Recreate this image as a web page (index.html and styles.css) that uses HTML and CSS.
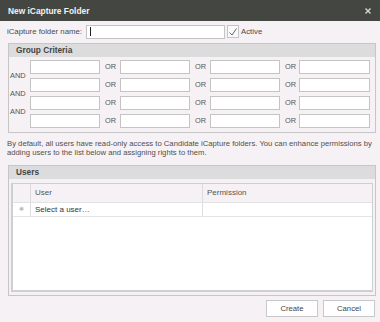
FILE: index.html
```html
<!DOCTYPE html>
<html lang="en">
<head>
    <meta charset="UTF-8">
    <title>New iCapture Folder</title>
    <link rel="stylesheet" href="styles.css">
</head>
<body>

    <div class="dialog">
        <div class="titlebar">
            <span class="title">New iCapture Folder</span>
            <svg class="close" width="8" height="8" viewBox="0 0 8 8">
                <path d="M1.5 1.5 L6.5 6.5 M6.5 1.5 L1.5 6.5" stroke="#d6d6d6" stroke-width="1.4"/>
            </svg>
        </div>

        <div class="content">
            <div class="nameRow">
                <span class="label">iCapture folder name:</span>
                <div class="textBox nameBox"><span class="caret"></span></div>
                <span class="checkBox">
                    <svg width="10" height="10" viewBox="0 0 10 10">
                        <path d="M1.5 5.5 L4 8 L8.5 1.5" fill="none" stroke="#666" stroke-width="1"/>
                    </svg>
                </span>
                <span class="label">Active</span>
            </div>

            <!-- Group Criteria -->
            <div class="panel criteriaPanel">
                <div class="panelHead">Group Criteria</div>
                <div class="criteria">
                    <div class="andCol">
                        <span>AND</span>
                        <span>AND</span>
                        <span>AND</span>
                    </div>
                    <div class="orGrid">
                        <div class="textBox"></div><span class="or">OR</span>
                        <div class="textBox"></div><span class="or">OR</span>
                        <div class="textBox"></div><span class="or">OR</span>
                        <div class="textBox"></div>

                        <div class="textBox"></div><span class="or">OR</span>
                        <div class="textBox"></div><span class="or">OR</span>
                        <div class="textBox"></div><span class="or">OR</span>
                        <div class="textBox"></div>

                        <div class="textBox"></div><span class="or">OR</span>
                        <div class="textBox"></div><span class="or">OR</span>
                        <div class="textBox"></div><span class="or">OR</span>
                        <div class="textBox"></div>

                        <div class="textBox"></div><span class="or">OR</span>
                        <div class="textBox"></div><span class="or">OR</span>
                        <div class="textBox"></div><span class="or">OR</span>
                        <div class="textBox"></div>
                    </div>
                </div>
            </div>

            <p class="note">By default, all users have read-only access to Candidate iCapture folders. You can enhance permissions by adding users to the list below and assigning rights to them.</p>

            <!-- Users -->
            <div class="panel usersPanel">
                <div class="panelHead">Users</div>
                <div class="usersGrid">
                    <div class="gridHead">
                        <span class="indicator"></span>
                        <span class="userCol">User</span>
                        <span class="permCol">Permission</span>
                    </div>
                    <div class="gridRow">
                        <span class="indicator">&#10033;</span>
                        <span class="userCol">Select a user&hellip;</span>
                        <span class="permCol"></span>
                    </div>
                </div>
            </div>

            <div class="buttons">
                <button>Create</button>
                <button>Cancel</button>
            </div>
        </div>
    </div>

</body>
</html>
```

FILE: styles.css
```css
body {
    margin: 0;
    padding: 0;
    background-color: #f6f1f4;
    font-family: 'Liberation Sans', Arial, sans-serif;
    font-size: 8px;
    color: #4a4a4a;
}

.dialog {
    width: 380px;
    height: 322px;
    display: flex;
    flex-direction: column;
}

/* Title bar */
.titlebar {
    height: 21px;
    flex-shrink: 0;
    background: #444642;
    display: flex;
    align-items: center;
    justify-content: space-between;
    padding: 0 8px 0 8px;
    box-sizing: border-box;
}

.title {
    color: #f2f2f2;
    font-weight: bold;
    font-size: 8.4px;
}

.content {
    flex: 1;
    display: flex;
    flex-direction: column;
    padding: 3px 5px 5px 7px;
}

/* Name row */
.nameRow {
    display: flex;
    align-items: center;
    height: 15px;
}

.nameRow .label {
    font-size: 7.8px;
    margin-right: 4px;
}

.textBox {
    background: #ffffff;
    border: 1px solid #c4c4c4;
    box-sizing: border-box;
    height: 14px;
}

.nameBox {
    width: 139px;
    display: flex;
    align-items: center;
    padding-left: 3px;
}

.caret {
    width: 1px;
    height: 9px;
    background: #222;
}

.checkBox {
    width: 12px;
    height: 13px;
    margin-left: 2px;
    margin-right: 2px;
    border: 1px solid #c4c4c4;
    background: #fafafa;
    box-sizing: border-box;
    display: flex;
    align-items: center;
    justify-content: center;
}

/* Panels */
.panel {
    border: 1px solid #c6c6c6;
    margin-left: 1px;
    margin-right: -1px;
}

.criteriaPanel {
    margin-top: 4px;
}

.panelHead {
    background: #dcdcdc;
    height: 13px;
    line-height: 13px;
    padding-left: 7px;
    font-weight: bold;
    font-size: 8.3px;
    color: #444;
}

.criteria {
    display: flex;
    padding: 3px 5px 4px 1px;
}

.andCol {
    width: 21px;
    display: flex;
    flex-direction: column;
    padding-top: 7px;
    font-size: 7.4px;
    color: #555;
}

.andCol span {
    height: 18px;
    line-height: 18px;
}

.orGrid {
    display: grid;
    grid-template-columns: 70px 20px 70px 20px 70px 19px 71px;
    grid-auto-rows: 14px;
    row-gap: 4px;
}

.or {
    font-size: 7.4px;
    color: #555;
    line-height: 14px;
    padding-left: 5px;
}

/* Note */
.note {
    margin: 6px 0 8px 0;
    line-height: 9px;
    font-size: 7.7px;
    color: #505050;
}

/* Users grid */
.usersPanel {
    flex: 1;
    display: flex;
    flex-direction: column;
}

.usersGrid {
    flex: 1;
    margin: 4px 2px 3px 2px;
    border: 1px solid #cfcfcf;
    border-left-width: 2px;
    border-bottom-width: 2px;
    background: #ffffff;
}

.gridHead,
.gridRow {
    display: flex;
}

.gridHead {
    height: 18px;
    line-height: 18px;
    background: #f6f1f4;
    border-bottom: 1px solid #e2e2e2;
}

.gridRow {
    height: 13px;
    line-height: 13px;
    border-bottom: 1px solid #e4e4e4;
}

.indicator {
    width: 17px;
    text-align: center;
    color: #bbbbbb;
    font-size: 6px;
}

.userCol {
    width: 167px;
    padding-left: 4px;
    border-left: 1px solid #dcdcdc;
}

.permCol {
    flex: 1;
    padding-left: 4px;
    border-left: 1px solid #dcdcdc;
}

.gridHead span {
    color: #555;
}

.gridRow .userCol {
    color: #333;
}

/* Buttons */
.buttons {
    display: flex;
    justify-content: flex-end;
    gap: 5px;
    margin-top: 4px;
}

button {
    width: 52px;
    height: 17px;
    background: #ffffff;
    border: 1px solid #c8c8c8;
    font-family: 'Liberation Sans', Arial, sans-serif;
    font-size: 7.7px;
    color: #444;
    padding: 0;
}
```
